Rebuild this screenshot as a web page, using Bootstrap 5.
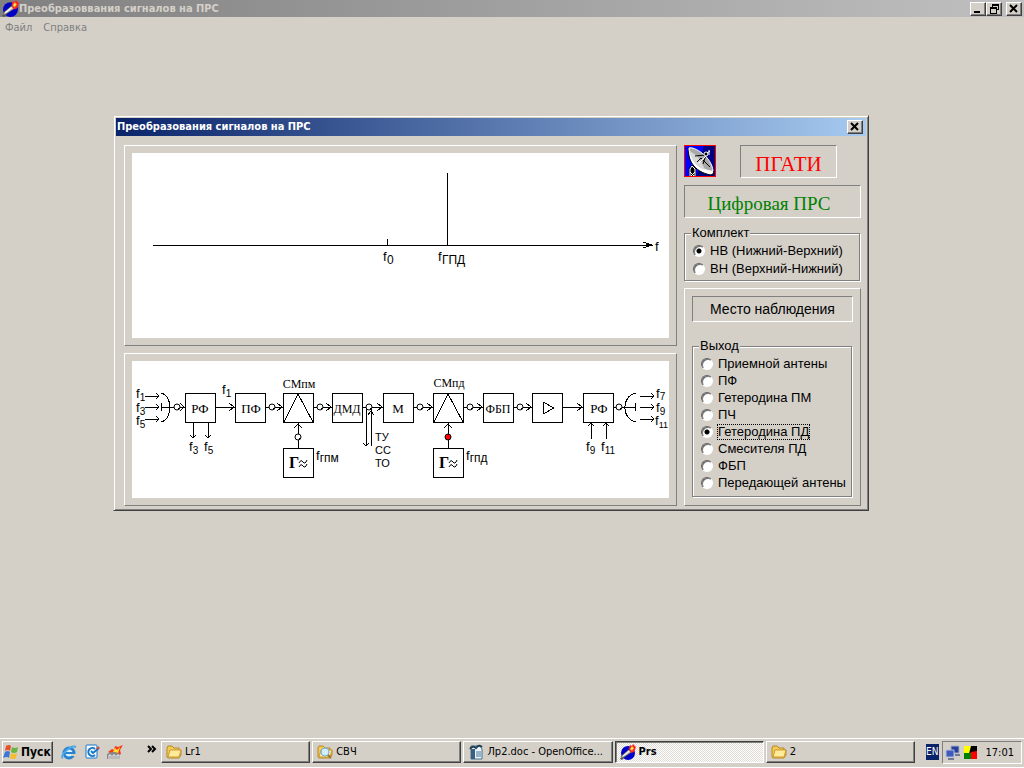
<!DOCTYPE html>
<html lang="ru">
<head>
<meta charset="utf-8">
<meta name="viewport" content="width=device-width, initial-scale=1">
<title>Преобразоввания сигналов на ПРС</title>
<link href="https://cdn.jsdelivr.net/npm/bootstrap@5.3.0/dist/css/bootstrap.min.css" rel="stylesheet">
<style>
  :root { --face: #d4d0c8; --shade: #808080; --dark: #404040; --ui: "DejaVu Sans Condensed", "DejaVu Sans", sans-serif; }
  body { background: var(--face); color: #000; font: 11px/14px var(--ui); }
  svg { display: block; flex: none; }
  button { color: #000; font: inherit; }
  .ui-raised { border: 1px solid; border-color: #fff var(--shade) var(--shade) #fff; }
  .ui-sunken { border: 1px solid; border-color: var(--shade) #fff #fff var(--shade); }
  .ui-button { background: var(--face); padding: 0; border: 1px solid; border-color: #fff var(--dark) var(--dark) #fff; box-shadow: inset -1px -1px 0 var(--shade); }
  .caption-text { font-weight: bold; white-space: nowrap; }
  .app-caption { height: 17px; padding-right: 2px; background: linear-gradient(90deg, #808080, #c0c0c0); color: var(--face); }
  .caption-button { width: 16px; height: 14px; }
  .app-menu { padding: 4px 5px; gap: 11px; }
  .app-menu a { color: var(--shade); text-decoration: none; }
  .dialog-window { position: absolute; top: 76px; left: 113px; right: 155px; min-width: 560px; padding: 1px; background: var(--face); border: 1px solid; border-color: var(--face) var(--dark) var(--dark) var(--face); box-shadow: inset 1px 1px 0 #fff, inset -1px -1px 0 var(--shade); }
  .dialog-caption { height: 18px; margin: 1px; padding: 0 3px 0 1px; background: linear-gradient(90deg, #0a246a, #a6caf0); color: #fff; }
  .dialog-content { padding: 8px 6px 3px 9px; gap: 7px; }
  .plot-column { gap: 7px; }
  .plot-frame { padding: 7px; }
  .plot-frame svg { width: 100%; height: auto; background: #fff; }
  .side-column { width: 177px; flex: none; gap: 7px; font: 13px/16px "Liberation Sans", sans-serif; }
  .school-name { width: 97px; height: 33px; font: 21px/37px "Liberation Serif", serif; color: #f00; }
  .system-name { height: 33px; padding-right: 7px; font: 19px/35px "Liberation Serif", serif; color: #008000; }
  .place-name { height: 26px; font-size: 14px; line-height: 25px; }
  .option-group { border: 1px solid var(--shade); box-shadow: 1px 1px 0 #fff, inset 1px 1px 0 #fff; padding: 0 0 3px 8px; margin-right: 1px; }
  .option-group legend { font-size: 13px; line-height: 16px; background: var(--face); padding: 0 1px; margin: 0 0 0 -2px; }
  .kit-group legend { margin-bottom: 1px; }
  .kit-group { padding-bottom: 2px; }
  .output-group { padding-bottom: 5px; }
  .output-group legend { margin-bottom: 1px; }
  .option-row { display: flex; align-items: center; height: 17px; white-space: nowrap; }
  .option-row.tall-row { height: 18px; }
  .option-row label { padding: 0 1px; margin-left: 4px; line-height: 16px; }
  .option-row input { appearance: none; width: 12px; height: 12px; margin: 0; border-radius: 50%; border: 1px solid; border-color: #606060 #fff #fff #606060; background: #fff; box-shadow: inset 1px 1px 0 #707070; }
  .option-row input:checked { background: radial-gradient(circle at 5px 5px, #000 2px, #fff 3px); }
  .option-row .focused-label { outline: 1px dotted #000; outline-offset: -1px; }
  .place-panel { padding: 7px; }
  .task-bar { border-top: 1px solid #fff; border-bottom: 1px solid #fff; height: 30px; padding: 2px 2px 4px; flex: none; }
  .task-bar button { height: 22px; }
  .start-button { width: 51px; font-weight: bold; font-size: 12px; gap: 1px; }
  .quick-launch { width: 108px; padding: 0 3px 0 8px; gap: 7px; }
  .quick-launch button { background: none; border: 0; padding: 0; }
  .task-list { gap: 2px; margin-right: 11px; min-width: 0; }
  .task-list .ui-button { flex: 1 1 0; min-width: 0; padding: 0 4px; gap: 3px; text-align: left; }
  .task-list .pressed-task { background: repeating-conic-gradient(#fff 0 25%, #dedbd5 0 50%) 0 0/2px 2px; border-color: var(--dark) #fff #fff var(--dark); box-shadow: inset 1px 1px 0 var(--shade); font-weight: bold; }
  .lang-mark { background: #0a246a; color: #fff; width: 13px; height: 16px; line-height: 16px; overflow: hidden; font-size: 10px; margin-right: 3px; }
  .tray-box { width: 80px; padding: 0 7px 0 2px; gap: 3px; height: 23px; }
  .sans-label { font: 13px "Liberation Sans", sans-serif; }
  .sub-label { font-size: 10px; }
  .block-label { font: 13px "Liberation Serif", serif; text-anchor: middle; }
  .wide-label { font-size: 12px; }
  .generator-label { font: bold 16px "Liberation Serif", serif; }
</style>
</head>
<body class="vh-100 d-flex flex-column overflow-hidden">
<svg width="0" height="0" class="position-absolute" aria-hidden="true">
  <defs>
    <symbol id="torch" viewBox="0 0 16 16">
      <circle cx="8" cy="9" r="7" fill="#0000c8"/>
      <path d="M0 15l2-4 7-6 3 3-7 5-3 3z" fill="#555"/><path d="M1 14l2-3 6-5 2 2-6 4z" fill="#c8c8c8"/><path d="M3 12l6-5" stroke="#fff"/>
      <path d="M9 5l1-4 2 1 1-2 3 3-2 5-3 1z" fill="#f22"/><path d="M10 5l2-3 2 2-2 3z" fill="#fb3"/><path d="M11 5l1-2 1 2z" fill="#ff8"/>
    </symbol>
    <symbol id="folder" viewBox="0 0 16 16">
      <path d="M1 13V4l1-2h4l2 2h5v2h2v5l-2 3H2z" fill="#f4ca50" stroke="#b8862c"/><path d="M2 13l2-7h11l-2 7H2z" fill="#ffec9a" stroke="#c99b35"/>
    </symbol>
    <symbol id="cross" viewBox="0 0 14 12"><path d="M3 2l7 7M10 2l-7 7" stroke="#000" stroke-width="2"/></symbol>
    <g id="probe"><circle r="3"/><path d="M1 2l1-1"/></g>
  </defs>
</svg>

<header>
  <div class="app-caption d-flex align-items-center">
    <svg width="19" height="17"><use href="#torch" x="2" width="17" height="17"/></svg>
    <span class="caption-text flex-grow-1">Преобразоввания сигналов на ПРС</span>
    <button class="ui-button caption-button" aria-label="Свернуть"><svg width="14" height="12"><path d="M3 9h6" stroke="#000" stroke-width="2"/></svg></button>
    <button class="ui-button caption-button" aria-label="Восстановить"><svg width="14" height="12" shape-rendering="crispEdges" fill="none" stroke="#000"><path d="M5 5V1h6v5H9M5 2h6M3 4h6v6H3zM3 5h6"/></svg></button>
    <button class="ui-button caption-button ms-1" aria-label="Закрыть"><svg width="14" height="12"><use href="#cross"/></svg></button>
  </div>
  <nav class="app-menu d-flex"><a href="#file">Файл</a><a href="#help">Справка</a></nav>
</header>

<main class="flex-grow-1 position-relative">
  <section class="dialog-window" role="dialog" aria-labelledby="dialog-title">
    <div class="dialog-caption d-flex align-items-center">
      <span id="dialog-title" class="caption-text flex-grow-1">Преобразования сигналов на ПРС</span>
      <button class="ui-button caption-button" aria-label="Закрыть"><svg width="14" height="12"><use href="#cross"/></svg></button>
    </div>
    <div class="dialog-content d-flex">
      <div class="plot-column flex-grow-1 d-flex flex-column">
        <div class="ui-raised plot-frame">
          <svg viewBox="132 153 537 185" role="img" aria-label="Спектр">
            <g fill="none" stroke="#000" shape-rendering="crispEdges">
              <path d="M153 245H653M387 239v6M447 173v72M643 242l9 3-9 3M646 244l6 1-6 1"/>
            </g>
            <g class="sans-label">
              <text x="655" y="251">f</text>
              <text x="383" y="261">f</text><text x="387" y="264" font-size="12">0</text>
              <text x="438" y="261">f</text><text x="442" y="264" font-size="12">ГПД</text>
            </g>
          </svg>
        </div>
        <div class="ui-raised plot-frame">
          <svg viewBox="132 361 537 137" role="img" aria-label="Структурная схема">
            <g fill="none" stroke="#000" shape-rendering="crispEdges">
              <path d="M185 393h30v29h-30zM235 393h30v29h-30zM283 393h30v29h-30zM332 393h30v29h-30zM383 393h30v29h-30zM433 393h30v29h-30zM483 393h30v29h-30zM532 393h30v29h-30zM583 393h30v29h-30zM283 448h30v29h-30zM433 448h30v29h-30z"/>
              <path d="M284 422l14-28 15 28M434 422l14-28 15 28M543 402v12l11-6z"/>
              <path d="M161 407h24M215 407h20M265 407h18M313 407h19M362 407h21M413 407h20M463 407h20M513 407h19M562 407h21M613 407h23M161 403v8M635 403v8"/>
              <path d="M180 403l4 4-4 4M229 403l5 4-5 4M277 403l5 4-5 4M326 403l5 4-5 4M377 403l5 4-5 4M427 403l5 4-5 4M477 403l5 4-5 4M526 403l5 4-5 4M577 403l5 4-5 4"/>
              <path d="M161 393C173 396 173 419 161 422M636 393C621 396 621 419 636 422"/>
              <path d="M145 396h14M145 407h14M145 419h14M156 393l3 3-3 3M156 404l3 3-3 3M156 416l3 3-3 3M640 396h14M640 407h14M640 419h14M651 393l3 3-3 3M651 404l3 3-3 3M651 416l3 3-3 3"/>
              <path d="M193 422v16M208 422v16M190 435l3 3 3-3M205 435l3 3 3-3M591 423v16M606 423v16M588 426l3-3 3 3M603 426l3-3 3 3"/>
              <path d="M298 422v26M448 422v26M294 428l4-4 4 4M444 428l4-4 4 4M366 407v39M371 409v37M363 443l3 3 3-3M368 415l3-4 3 4"/>
            </g>
            <g fill="#fff" stroke="#000">
              <use href="#probe" x="177" y="407"/><use href="#probe" x="272" y="407"/><use href="#probe" x="320" y="407"/><use href="#probe" x="369" y="407"/><use href="#probe" x="420" y="407"/><use href="#probe" x="470" y="407"/><use href="#probe" x="520" y="407"/><use href="#probe" x="619" y="407"/><use href="#probe" x="298" y="437"/><circle cx="448" cy="437" r="3" fill="#f00"/>
            </g>
            <g class="block-label">
              <text x="200" y="413">РФ</text><text x="251" y="413">ПФ</text><text x="347" y="413" class="wide-label">ДМД</text><text x="398" y="413">М</text><text x="498" y="413" class="wide-label">ФБП</text><text x="599" y="413">РФ</text>
              <text x="299" y="388" class="wide-label">СМпм</text><text x="449" y="387" class="wide-label">СМпд</text>
            </g>
            <g class="generator-label"><text x="289" y="468">Г</text><text x="439" y="468">Г</text></g>
            <g fill="none" stroke="#000"><path id="waves" d="M299 463q2-4 4-1t4-2M299 467q2-4 4-1t4-2"/><use href="#waves" x="150"/></g>
            <g class="sans-label">
              <text x="136" y="398">f<tspan class="sub-label" dy="3">1</tspan></text>
              <text x="136" y="412">f<tspan class="sub-label" dy="3">3</tspan></text>
              <text x="136" y="425">f<tspan class="sub-label" dy="3">5</tspan></text>
              <text x="222" y="394">f<tspan class="sub-label" dy="3">1</tspan></text>
              <text x="189" y="451">f<tspan class="sub-label" dy="3">3</tspan></text>
              <text x="204" y="451">f<tspan class="sub-label" dy="3">5</tspan></text>
              <text x="316" y="460">f<tspan font-size="12" dy="2">гпм</tspan></text>
              <text x="466" y="460">f<tspan font-size="12" dy="2">гпд</tspan></text>
              <text x="586" y="451">f<tspan class="sub-label" dy="3">9</tspan></text>
              <text x="601" y="451">f<tspan class="sub-label" dy="3">11</tspan></text>
              <text x="656" y="398">f<tspan class="sub-label" dy="2">7</tspan></text>
              <text x="656" y="412">f<tspan class="sub-label" dy="3">9</tspan></text>
              <text x="655" y="425">f<tspan font-size="9" dy="3">11</tspan></text>
            </g>
            <g font-family="Liberation Sans, sans-serif" font-size="11"><text x="375" y="441">ТУ</text><text x="375" y="454">СС</text><text x="375" y="467">ТО</text></g>
          </svg>
        </div>
      </div>

      <div class="side-column d-flex flex-column">
        <div class="d-flex">
          <svg width="32" height="32" viewBox="0 0 32 32" aria-hidden="true">
            <path d="M0 0h32v32H0z" fill="#00f"/><path d="M20 0h12v32H12z" fill="#000080"/>
            <path d="M5 31v-8l3-3 4 3v8z" fill="#000"/><path d="M6 31v-7l2-3 3 3v7M7 31l4-4M10 31l-4-4" fill="none" stroke="#fff"/>
            <path d="M5 3C3 13 9 27 27 30l3-2-2-5Z" fill="#fff" stroke="#000"/>
            <path d="M5 3c5-2 23 9 24 23C20 27 5 15 5 3z" fill="#a8a8a8" stroke="#fff"/>
            <path d="M6 6l7 5 5 7 3 7C12 22 7 15 6 6z" fill="#d8d8d8"/>
            <path d="M11 11l11-1M19 19l3-9M13 17l4-4 9 9" stroke="#000" fill="none"/>
            <path d="M15 18l7-7" stroke="#fff"/>
            <circle cx="22" cy="9" r="2" fill="#000" stroke="#fff"/><path d="M23 8l3-2M25 10V5" stroke="#fff"/>
            <path d="M0 0h32v32H0z" fill="none" stroke="#f00" stroke-width="2"/>
          </svg>
          <div class="ui-sunken school-name text-center ms-4">ПГАТИ</div>
        </div>
        <div class="ui-sunken system-name text-center">Цифровая ПРС</div>
        <fieldset class="option-group kit-group">
          <legend class="float-none w-auto d-table">Комплект</legend>
          <div class="option-row tall-row"><input type="radio" name="kit" id="k1" checked><label for="k1">НВ (Нижний-Верхний)</label></div>
          <div class="option-row tall-row"><input type="radio" name="kit" id="k2"><label for="k2">ВН (Верхний-Нижний)</label></div>
        </fieldset>
        <div class="ui-raised place-panel flex-grow-1">
          <div class="ui-sunken place-name text-center">Место наблюдения</div>
          <fieldset class="option-group output-group mt-3">
            <legend class="float-none w-auto d-table">Выход</legend>
            <div class="option-row"><input type="radio" name="out" id="o1"><label for="o1">Приемной антены</label></div>
            <div class="option-row"><input type="radio" name="out" id="o2"><label for="o2">ПФ</label></div>
            <div class="option-row"><input type="radio" name="out" id="o3"><label for="o3">Гетеродина ПМ</label></div>
            <div class="option-row"><input type="radio" name="out" id="o4"><label for="o4">ПЧ</label></div>
            <div class="option-row"><input type="radio" name="out" id="o5" checked><label class="focused-label" for="o5">Гетеродина ПД</label></div>
            <div class="option-row"><input type="radio" name="out" id="o6"><label for="o6">Смесителя ПД</label></div>
            <div class="option-row"><input type="radio" name="out" id="o7"><label for="o7">ФБП</label></div>
            <div class="option-row"><input type="radio" name="out" id="o8"><label for="o8">Передающей антены</label></div>
          </fieldset>
        </div>
      </div>
    </div>
  </section>
</main>

<footer class="task-bar d-flex align-items-start">
  <button class="ui-button start-button d-flex align-items-center">
    <svg width="17" height="16" viewBox="0 0 17 16"><path d="M3 2q3-2 5 0L7 7Q5 5 2 7z" fill="#e8502c"/><path d="M9 3q3 2 6 0l-1 5q-3 2-6 0z" fill="#69b43c"/><path d="M2 8q3-2 5 0l-1 6Q4 12 0 14z" fill="#3d77d6"/><path d="M8 9q3 2 6 0l-1 5q-3 2-6 0z" fill="#f5bd2b"/></svg>Пуск</button>
  <div class="quick-launch d-flex align-items-center">
    <button aria-label="Internet Explorer"><svg width="16" height="16"><circle cx="8" cy="9" r="5" fill="#d8f0ff" stroke="#2683cf" stroke-width="3"/><path d="M4 9h9" stroke="#2683cf" stroke-width="2"/><path d="M10 11h5" stroke="#d4d0c8" stroke-width="2"/><path d="M2 14C-2 13 9 0 15 3" fill="none" stroke="#4aa8e8" stroke-width="2"/></svg></button>
    <button aria-label="Outlook Express"><svg width="16" height="16"><rect x="2" y="1" width="11" height="13" rx="1" fill="#f4faff" stroke="#1878c8"/><path d="M11 5a4 4 0 1 0 0 6M7 7l2 2 6-5" fill="none" stroke="#1878c8" stroke-width="2"/><path d="M13 5l2-2" stroke="#e84028" stroke-width="2"/></svg></button>
    <button aria-label="Nero"><svg width="16" height="16"><path d="M1 8l4-3 2 1 1-4 3 1 5-2-3 5 1 4-4 2-5-2z" fill="#f33b16"/><path d="M6 8l2-4 2 2 3-3-2 6z" fill="#ffdf35"/><path d="M0 15v-5q6-4 13 0v5z" fill="#888"/><path d="M2 15v-4h2v4M6 15v-4h2v4M10 15v-4h2v4" fill="none" stroke="#eee"/></svg></button>
    <button class="ms-auto" aria-label="Дополнительно"><svg width="12" height="14"><path d="M2 1l3 3-3 3M6 1l3 3-3 3" fill="none" stroke="#000" stroke-width="2"/></svg></button>
  </div>
  <div class="task-list d-flex flex-grow-1">
    <button class="ui-button d-flex align-items-center"><svg width="16" height="16"><use href="#folder"/></svg><span class="text-truncate">Lr1</span></button>
    <button class="ui-button d-flex align-items-center"><svg width="16" height="16"><use href="#folder"/><circle cx="8" cy="8" r="4" fill="#d2efff" stroke="#72aed8"/><path d="M11 11l3 3" stroke="#987333" stroke-width="2"/></svg><span class="text-truncate">СВЧ</span></button>
    <button class="ui-button d-flex align-items-center"><svg width="16" height="16"><path d="M3 2h9l2 3v10H3z" fill="#e9f2fa" stroke="#44708f"/><path d="M3 5h4v10H3z" fill="#39617d"/><path d="M8 8h5M8 10h5M8 12h5" stroke="#477695"/><path d="M2 5q3-4 6-1 3-4 6-1" fill="none" stroke="#233d50" stroke-width="2"/></svg><span class="text-truncate">Лр2.doc - OpenOffice...</span></button>
    <button class="ui-button pressed-task d-flex align-items-center"><svg width="16" height="16"><use href="#torch"/></svg><span class="text-truncate">Prs</span></button>
    <button class="ui-button d-flex align-items-center"><svg width="16" height="16"><use href="#folder"/></svg><span class="text-truncate">2</span></button>
  </div>
  <div class="lang-mark align-self-center">EN</div>
  <div class="ui-sunken tray-box d-flex align-items-center">
    <svg width="16" height="16"><path d="M6 1h8v7H6z" fill="#27409b" stroke="#a4acc8"/><path d="M1 5h8v7H1z" fill="#3e5cbd" stroke="#b9c0d8"/><path d="M3 14h6M10 10h5" stroke="#747994" stroke-width="2"/></svg>
    <svg width="14" height="14"><path d="M0 0h7l-1 7H0z" fill="#ff0"/><path d="M7 0h6v7L5 8z" fill="#000"/><path d="M0 7h7v6H0z" fill="#008000"/><path d="M7 6l6-1v8H7z" fill="#f00"/></svg>
    <time class="ms-auto">17:01</time>
  </div>
</footer>
<script src="https://cdn.jsdelivr.net/npm/bootstrap@5.3.0/dist/js/bootstrap.bundle.min.js"></script>
</body>
</html>
